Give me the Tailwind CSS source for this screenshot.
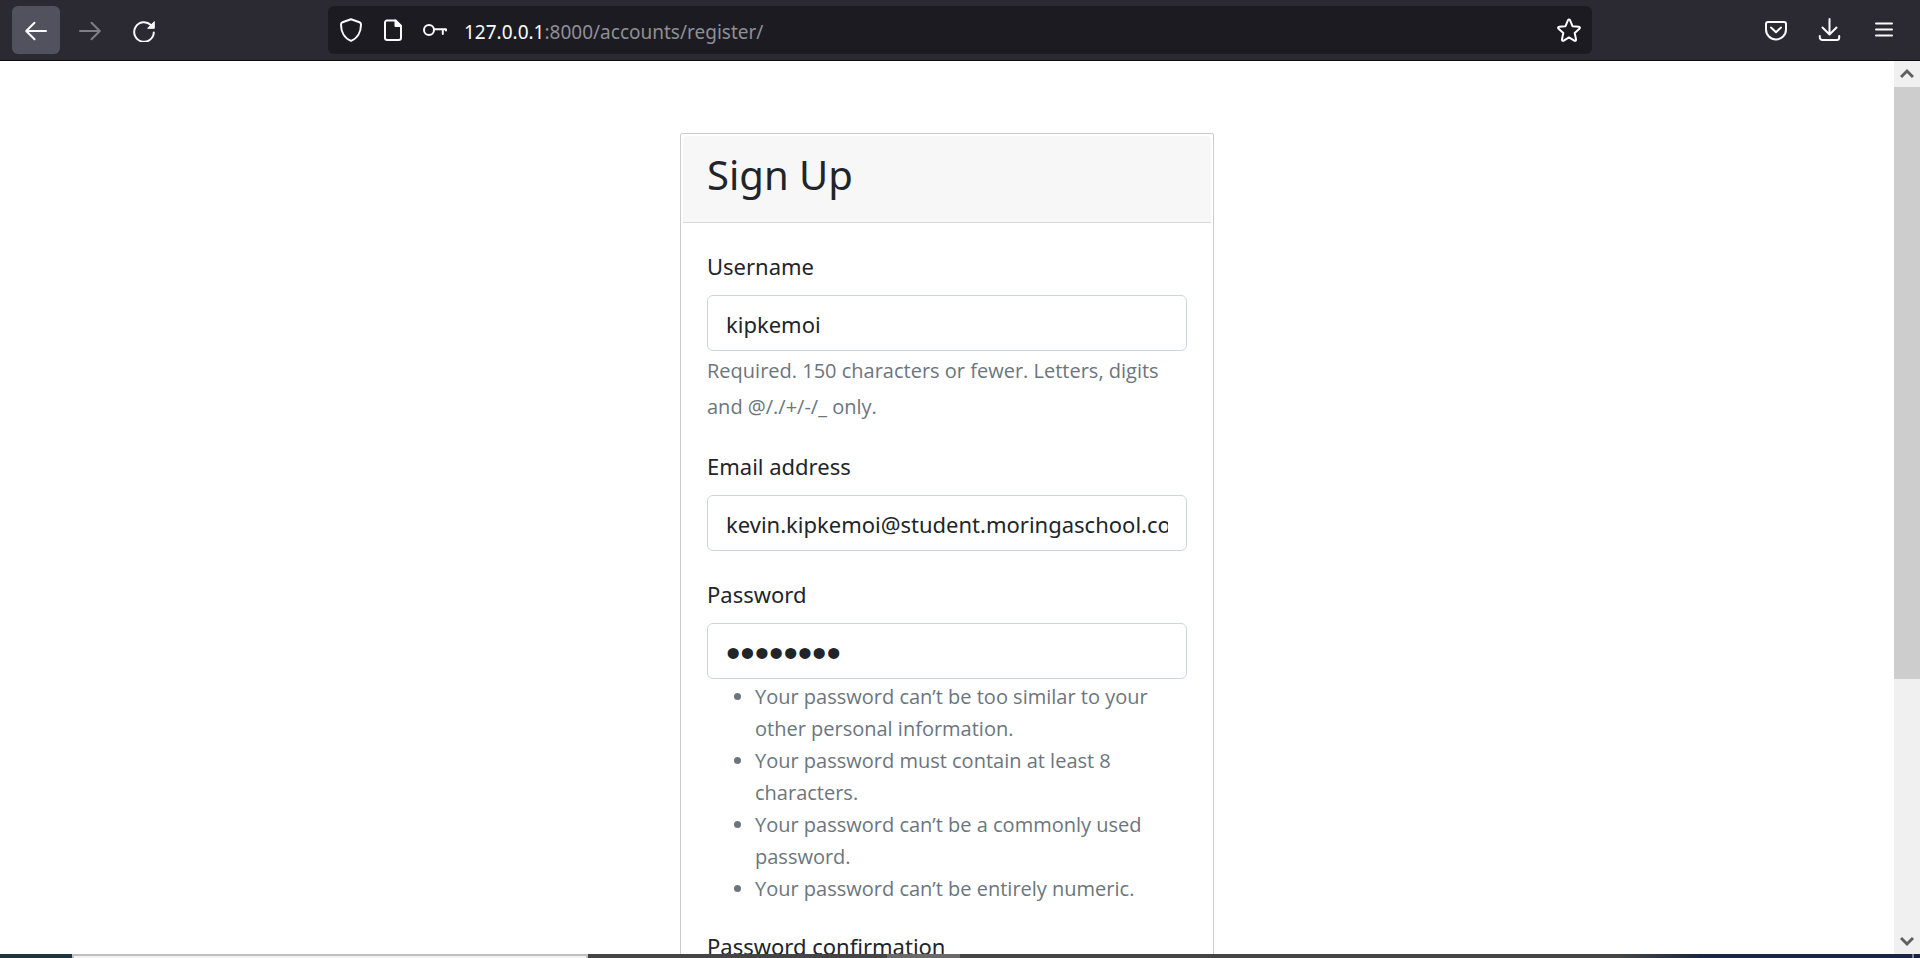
<!DOCTYPE html>
<html lang="en">
<head>
<meta charset="utf-8">
<title>Sign Up</title>
<script src="https://cdn.jsdelivr.net/npm/@tailwindcss/browser@4"></script>
</head>
<body class="flex h-screen flex-col overflow-hidden bg-white font-['Noto_Sans','Open_Sans',sans-serif] text-[#212529]">

<!-- Browser toolbar -->
<header class="flex shrink-0 items-center border-b border-[#0c0c0d] bg-[#2b2a33] px-3 py-1.5 text-[#fbfbfe]">
  <nav class="flex gap-1.5" aria-label="Navigation">
    <button type="button" aria-label="Back" class="grid size-12 place-items-center rounded-md bg-[#52525e]">
      <svg class="size-6" viewBox="0 0 24 24" fill="none" stroke="currentColor" stroke-width="2" stroke-linecap="round" stroke-linejoin="round"><path d="M22 13H2.500M10.500 4.700L2.200 13l8.300 8.300"/></svg>
    </button>
    <button type="button" aria-label="Forward" disabled class="grid size-12 place-items-center rounded-md text-[#7f7e84]">
      <svg class="size-6" viewBox="0 0 24 24" fill="none" stroke="currentColor" stroke-width="2" stroke-linecap="round" stroke-linejoin="round"><path d="M2 13h19.500M13.500 4.700L21.800 13l-8.300 8.300"/></svg>
    </button>
    <button type="button" aria-label="Reload" class="grid size-12 place-items-center rounded-md">
      <svg class="size-6" viewBox="0 0 24 24" fill="none" stroke="currentColor" stroke-width="2" stroke-linecap="round" stroke-linejoin="round"><path d="M21.800 14.500A9.800 9.800 0 1 1 18.900 7"/><path d="M22.300 4v6.300h-6.300z" fill="currentColor" stroke-width="1"/></svg>
    </button>
  </nav>

  <div class="mx-40 flex h-12 flex-1 items-center rounded-md bg-[#1c1b22] px-0.5">
    <button type="button" aria-label="Tracking protection" class="grid h-12 w-[42px] place-items-center">
      <svg class="size-6" viewBox="0 0 24 24" fill="none" stroke="currentColor" stroke-width="2" stroke-linejoin="round"><path d="M12 1.200L20.500 4.300Q22 4.900 22 6.500C22 14 18.500 20.500 12 22.900C5.500 20.500 2 14 2 6.500Q2 4.900 3.500 4.300Z"/></svg>
    </button>
    <button type="button" aria-label="Site information" class="grid h-12 w-[42px] place-items-center">
      <svg class="size-6" viewBox="0 0 24 24" fill="none" stroke="currentColor" stroke-width="2" stroke-linejoin="round"><path d="M6 2.500h8.500L20 8v11.700a2.300 2.300 0 0 1-2.300 2.300H6.300A2.300 2.300 0 0 1 4 19.700V4.500a2 2 0 0 1 2-2z"/><path d="M14.500 2.500V8H20z" fill="currentColor"/></svg>
    </button>
    <button type="button" aria-label="Saved logins" class="grid h-12 w-[42px] place-items-center">
      <svg class="size-6" viewBox="0 0 24 24" fill="none" stroke="currentColor" stroke-width="2" stroke-linecap="round" stroke-linejoin="round"><circle cx="6" cy="12" r="5"/><path d="M11 11.200h12v1.300M19.800 11.500V16"/></svg>
    </button>
    <a href="#" class="ml-2 flex-1 pt-[3px] text-[19px] leading-6 text-[#8f8f96]"><span class="text-[#fbfbfe]">127.0.0.1</span>:8000/accounts/register/</a>
    <button type="button" aria-label="Bookmark this page" class="grid h-12 w-[42px] place-items-center">
      <svg class="size-6" viewBox="0 0 24 24" fill="none" stroke="currentColor" stroke-width="2" stroke-linejoin="round"><path d="M10.900 2.300Q12 .700 13.100 2.300L15.500 8.200L21.700 8.800Q23.700 9.300 22.400 10.800L17.700 15L19 21.300Q19.100 23.300 17.300 22.700L12 19.400L6.700 22.700Q4.900 23.300 5 21.300L6.300 15L1.600 10.800Q.300 9.300 2.300 8.800L8.500 8.200Z"/></svg>
    </button>
  </div>

  <div class="flex gap-1.5">
    <button type="button" aria-label="Save to Pocket" class="grid size-12 place-items-center">
      <svg class="size-6" viewBox="0 0 24 24" fill="none" stroke="currentColor" stroke-width="2" stroke-linecap="round" stroke-linejoin="round"><path d="M4 4h16a2 2 0 0 1 2 2v5.500a10 10 0 0 1-20 0V6a2 2 0 0 1 2-2z"/><path d="M7 9.500l5 4.800 5-4.800"/></svg>
    </button>
    <button type="button" aria-label="Downloads" class="grid size-12 place-items-center">
      <svg class="size-6" viewBox="0 0 24 24" fill="none" stroke="currentColor" stroke-width="2" stroke-linecap="round" stroke-linejoin="round"><path d="M11.500 1v15M4.500 9.500l7 7 7-7M1.800 18v1.500a2.500 2.500 0 0 0 2.500 2.500h14.400a2.500 2.500 0 0 0 2.500-2.500V18"/></svg>
    </button>
    <button type="button" aria-label="Menu" class="grid size-12 place-items-center">
      <svg class="size-6" viewBox="0 0 24 24" fill="none" stroke="currentColor" stroke-width="2" stroke-linecap="round"><path d="M4 5.500h16M4 11.500h16M4 17.500h16"/></svg>
    </button>
  </div>
</header>

<div class="flex min-h-0 flex-1">
  <main class="flex-1 overflow-hidden pt-[72px]">
    <div class="mx-auto w-full max-w-[534px] rounded-xs border border-[#cccccc] p-0.5">
      <div class="rounded-t border-b border-[#d8d8d8] bg-[#f7f7f7] px-6 pt-3.5 pb-[22px]">
        <h1 class="text-[40px] leading-[50px]">Sign Up</h1>
      </div>
      <form class="flex flex-col gap-6 px-6 py-6">
        <div>
          <label for="username" class="mb-[11px] block pt-px text-[22px] leading-9">Username</label>
          <input id="username" type="text" value="kipkemoi" class="block h-14 w-full rounded-md border border-[#ced4da] px-[18px] pt-0.5 text-[22px]">
          <p class="-mb-0.5 pt-0.5 font-['Open_Sans',sans-serif] text-[20px] leading-9 text-[#6c757d]">Required. 150 characters or fewer. Letters, digits and @/./+/-/_ only.</p>
        </div>
        <div>
          <label for="email" class="mb-[11px] block pt-px text-[22px] leading-9">Email address</label>
          <input id="email" type="email" value="kevin.kipkemoi@student.moringaschool.com" class="block h-14 w-full rounded-md border border-[#ced4da] px-[18px] pt-0.5 text-[22px]">
        </div>
        <div>
          <label for="password1" class="mb-[11px] block pt-px text-[22px] leading-9">Password</label>
          <input id="password1" type="password" value="password" class="block h-14 w-full rounded-md border border-[#ced4da] px-[18px] pt-1.5 font-['Liberation_Sans',sans-serif] text-[41px]">
          <ul class="-mb-0.5 list-disc pt-0.5 pl-12 font-['Open_Sans',sans-serif] text-[20px] leading-8 text-[#6c757d]">
            <li>Your password can’t be too similar to your other personal information.</li>
            <li>Your password must contain at least 8 characters.</li>
            <li>Your password can’t be a commonly used password.</li>
            <li>Your password can’t be entirely numeric.</li>
          </ul>
        </div>
        <div>
          <label for="password2" class="mb-[11px] block pt-px text-[22px] leading-9">Password confirmation</label>
          <input id="password2" type="password" class="block h-14 w-full rounded-md border border-[#ced4da] px-[18px] text-[22px]">
        </div>
      </form>
    </div>
  </main>

  <!-- Page scrollbar -->
  <div class="flex w-[26px] shrink-0 flex-col bg-[#f0f0f0] text-[#606060]">
    <button type="button" aria-label="Scroll up" class="grid h-[26px] place-items-center">
      <svg class="h-3 w-[14px]" viewBox="0 0 14 12" fill="none" stroke="currentColor" stroke-width="3"><path d="M1 9l6-6 6 6"/></svg>
    </button>
    <div class="flex-1"><div class="h-[70.4%] bg-[#cdcdcd]"></div></div>
    <button type="button" aria-label="Scroll down" class="grid h-[26px] place-items-center">
      <svg class="h-3 w-[14px]" viewBox="0 0 14 12" fill="none" stroke="currentColor" stroke-width="3"><path d="M1 3l6 6 6-6"/></svg>
    </button>
  </div>
</div>

<!-- Top edge of the desktop taskbar -->
<footer class="flex h-1 shrink-0 bg-[#454545]">
  <div class="w-[72px] bg-[#1d363f]"></div>
  <div class="w-[516px] border-x-2 border-t-2 border-[#c0c0c0] bg-[#f2f2f2]"></div>
  <div class="w-[299px]"></div>
  <div class="w-[73px] bg-[#6a6a6a]"></div>
  <div class="flex-1"></div>
  <div class="w-20 bg-linear-to-r from-[#454545] to-[#1b2742]"></div>
  <div class="w-[212px] bg-[#1b2742]"></div>
  <div class="w-0.5 bg-[#7b8292]"></div>
  <div class="w-1.5 bg-[#1b2742]"></div>
</footer>
</body>
</html>
